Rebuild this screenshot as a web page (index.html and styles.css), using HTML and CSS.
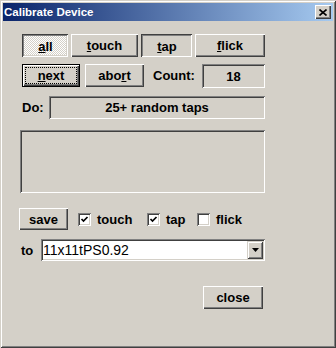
FILE: index.html
```html
<!DOCTYPE html>
<html lang="en">
<head>
  <meta charset="UTF-8" />
  <title>Calibrate Device</title>
  <link rel="stylesheet" href="styles.css">
</head>
<body>
  <div class="window">
    <div class="titlebar">
      <span class="title">Calibrate Device</span>
      <button class="tb-close">
        <svg width="8" height="7" viewBox="0 0 8 7"><path d="M0.5 0.5 L7.5 6.5 M7.5 0.5 L0.5 6.5" stroke="#000" stroke-width="1.6" fill="none"/></svg>
      </button>
    </div>

    <div class="content">
      <div class="row modes">
        <button class="btn checked w-all"><u>a</u>ll</button>
        <button class="btn w-touch"><u>t</u>ouch</button>
        <button class="btn pressed w-tap"><u>t</u>ap</button>
        <button class="btn w-flick"><u>f</u>lick</button>
      </div>

      <div class="row actions">
        <button class="btn default w-next"><span class="focus"><u>n</u>ext</span></button>
        <button class="btn w-abort">abo<u>r</u>t</button>
        <span class="label count-label">Count:</span>
        <div class="field count">18</div>
      </div>

      <div class="row todo">
        <span class="label">Do:</span>
        <div class="field do">25+ random taps</div>
      </div>

      <div class="field log"></div>

      <div class="row save-row">
        <button class="btn w-save">save</button>
        <label class="check c-touch">
          <span class="box"><svg width="9" height="9" viewBox="0 0 9 9"><path d="M1.5 4 L3.5 6 L7.5 2" stroke="#000" stroke-width="1.7" fill="none"/></svg></span>touch
        </label>
        <label class="check c-tap">
          <span class="box"><svg width="9" height="9" viewBox="0 0 9 9"><path d="M1.5 4 L3.5 6 L7.5 2" stroke="#000" stroke-width="1.7" fill="none"/></svg></span>tap
        </label>
        <label class="check c-flick">
          <span class="box"></span>flick
        </label>
      </div>

      <div class="row to-row">
        <span class="label">to</span>
        <div class="combo">
          <span class="combo-text">11x11tPS0.92</span>
          <span class="combo-btn"><svg width="7" height="4" viewBox="0 0 7 4"><path d="M0 0 H7 L3.5 4 Z" fill="#000"/></svg></span>
        </div>
      </div>

      <div class="row close-row">
        <button class="btn w-close">close</button>
      </div>
    </div>
  </div>
</body>
</html>
```

FILE: styles.css
```css
body {
  margin: 0;
  background: #d4d0c8;
  font-family: "Liberation Sans", Arial, sans-serif;
}

.window {
  width: 336px;
  height: 348px;
  box-sizing: border-box;
  padding: 3px;
  background: #d4d0c8;
  box-shadow: inset 1px 1px 0 #d4d0c8, inset -1px -1px 0 #404040,
              inset 2px 2px 0 #fff, inset -2px -2px 0 #808080;
}

.titlebar {
  height: 18px;
  display: flex;
  align-items: center;
  justify-content: space-between;
  padding: 0 2px 0 1px;
  background: linear-gradient(to right, #0a246a, #a6caf0);
}

.title {
  color: #fff;
  font-weight: bold;
  font-size: 11.5px;
}

.tb-close {
  width: 16px;
  height: 14px;
  padding: 0;
  border: none;
  background: #d4d0c8;
  display: flex;
  align-items: center;
  justify-content: center;
  box-shadow: inset 1px 1px 0 #fff, inset -1px -1px 0 #404040, inset -2px -2px 0 #808080;
}

.content {
  width: 245px;
  padding: 13px 0 0 17px;
  font-size: 13px;
  font-weight: bold;
  color: #000;
}

.row {
  display: flex;
  align-items: center;
}

.btn {
  height: 23px;
  padding: 0;
  border: none;
  background: #d4d0c8;
  font-family: inherit;
  font-size: 13px;
  font-weight: bold;
  color: #000;
  box-shadow: inset 1px 1px 0 #fff, inset -1px -1px 0 #404040, inset -2px -2px 0 #808080;
}

.btn.pressed {
  padding: 1px 0 0 1px;
  box-shadow: inset 1px 1px 0 #404040, inset -1px -1px 0 #fff,
              inset 2px 2px 0 #808080, inset -2px -2px 0 #d4d0c8;
}

.btn.checked {
  padding: 1px 0 0 1px;
  background: repeating-conic-gradient(#fff 0 25%, #d4d0c8 0 50%) 0 0 / 2px 2px;
  box-shadow: inset 1px 1px 0 #404040, inset -1px -1px 0 #fff,
              inset 2px 2px 0 #808080, inset -2px -2px 0 #d4d0c8;
}

.btn.default {
  box-shadow: inset 0 0 0 1px #000, inset 2px 2px 0 #fff,
              inset -2px -2px 0 #404040, inset -3px -3px 0 #808080;
  display: flex;
  padding: 4px;
  box-sizing: border-box;
}

.focus {
  flex: 1;
  display: flex;
  align-items: center;
  justify-content: center;
  outline: 1px dotted #000;
}

.modes {
  padding-left: 2px;
  gap: 3px;
}

.w-all { width: 46px; }
.w-touch { width: 67px; }
.w-tap { width: 51px; }
.w-flick { width: 70px; }
.w-next { width: 58px; }
.w-abort { width: 59px; margin-left: 5px; }
.w-save { width: 49px; height: 22px; margin-left: -1px; }
.w-close { width: 60px; }

.actions {
  margin-top: 7px;
  padding-left: 2px;
  align-items: flex-start;
}

.count-label {
  margin: 4px 0 0 9px;
}

.field {
  box-sizing: border-box;
  display: flex;
  align-items: center;
  justify-content: center;
  box-shadow: inset 1px 1px 0 #808080, inset -1px -1px 0 #fff,
              inset 2px 2px 0 #404040, inset -2px -2px 0 #d4d0c8;
}

.count {
  margin-left: auto;
  width: 63px;
  height: 24px;
}

.todo {
  margin-top: 8px;
  padding-left: 2px;
}

.do {
  margin-left: auto;
  width: 216px;
  height: 23px;
}

.log {
  margin-top: 11px;
  width: 245px;
  height: 63px;
}

.save-row {
  margin-top: 15px;
}

.check {
  display: flex;
  align-items: center;
  gap: 6px;
}

.c-touch { margin-left: 10px; width: 69px; }
.c-tap { width: 50px; }

.box {
  width: 13px;
  height: 13px;
  box-sizing: border-box;
  background: #fff;
  display: flex;
  align-items: center;
  justify-content: center;
  box-shadow: inset 1px 1px 0 #808080, inset -1px -1px 0 #fff,
              inset 2px 2px 0 #404040, inset -2px -2px 0 #d4d0c8;
}

.to-row {
  margin-top: 9px;
  padding-left: 1px;
  width: 244px;
}

.combo {
  margin-left: auto;
  width: 224px;
  height: 22px;
  box-sizing: border-box;
  padding: 2px;
  background: #fff;
  display: flex;
  align-items: center;
  box-shadow: inset 1px 1px 0 #808080, inset -1px -1px 0 #fff,
              inset 2px 2px 0 #404040, inset -2px -2px 0 #d4d0c8;
}

.combo-text {
  flex: 1;
  padding-left: 0;
  font-size: 14px;
  font-weight: normal;
}

.combo-btn {
  width: 16px;
  height: 18px;
  background: #d4d0c8;
  display: flex;
  align-items: center;
  justify-content: center;
  box-shadow: inset 1px 1px 0 #d4d0c8, inset -1px -1px 0 #404040,
              inset 2px 2px 0 #fff, inset -2px -2px 0 #808080;
}

.close-row {
  margin-top: 25px;
  justify-content: flex-end;
  padding-right: 2px;
}
```
